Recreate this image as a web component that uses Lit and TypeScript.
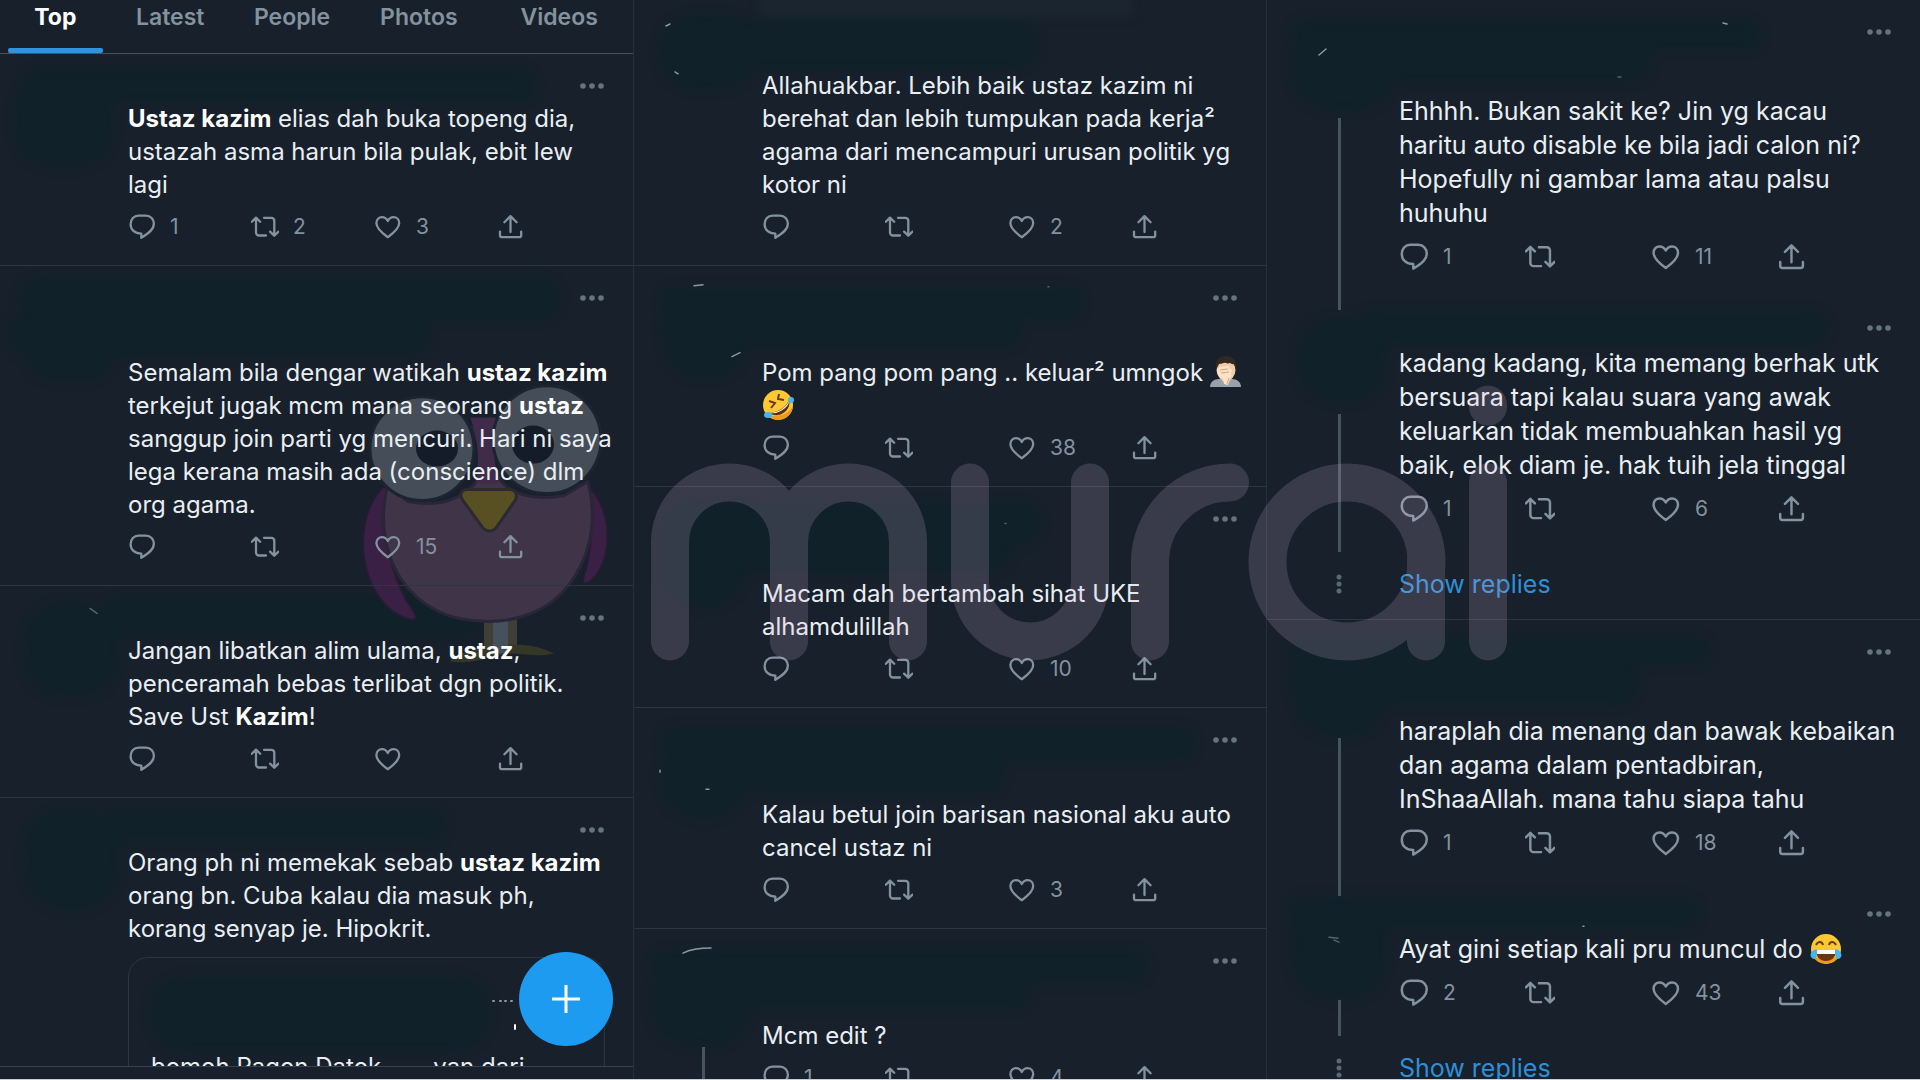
import { LitElement, html, css, svg, nothing, TemplateResult } from "lit";
import { customElement, property } from "lit/decorators.js";

type Part = string | { b: string } | { emoji: "palm" | "rofl" | "joy" };

interface Tweet {
  lines: Part[][];
  head: "none" | "short" | "tall";
  reply?: string;
  retweet?: string;
  like?: string;
  thread?: boolean;
  more?: boolean;
  quote?: boolean;
}

const b = (text: string): Part => ({ b: text });

const SEARCH: Tweet[] = [
  {
    head: "short",
    lines: [[b("Ustaz kazim"), " elias dah buka topeng dia,"], ["ustazah asma harun bila pulak, ebit lew"], ["lagi"]],
    reply: "1",
    retweet: "2",
    like: "3",
  },
  {
    head: "tall",
    lines: [
      ["Semalam bila dengar watikah ", b("ustaz kazim")],
      ["terkejut jugak mcm mana seorang ", b("ustaz")],
      ["sanggup join parti yg mencuri. Hari ni saya"],
      ["lega kerana masih ada (conscience) dlm"],
      ["org agama."],
    ],
    like: "15",
  },
  {
    head: "short",
    lines: [["Jangan libatkan alim ulama, ", b("ustaz"), ","], ["penceramah bebas terlibat dgn politik."], ["Save Ust ", b("Kazim"), "!"]],
  },
  {
    head: "short",
    lines: [["Orang ph ni memekak sebab ", b("ustaz kazim")], ["orang bn. Cuba kalau dia masuk ph,"], ["korang senyap je. Hipokrit."]],
    quote: true,
  },
];

const REPLIES: Tweet[] = [
  {
    head: "none",
    lines: [
      ["Allahuakbar. Lebih baik ustaz kazim ni"],
      ["berehat dan lebih tumpukan pada kerja²"],
      ["agama dari mencampuri urusan politik yg"],
      ["kotor ni"],
    ],
    like: "2",
  },
  { head: "tall", lines: [["Pom pang pom pang .. keluar² umngok ", { emoji: "palm" }], [{ emoji: "rofl" }]], like: "38" },
  { head: "tall", lines: [["Macam dah bertambah sihat UKE"], ["alhamdulillah"]], like: "10" },
  { head: "tall", lines: [["Kalau betul join barisan nasional aku auto"], ["cancel ustaz ni"]], like: "3" },
  { head: "tall", lines: [["Mcm edit ?"]], reply: "1", like: "4", thread: true },
];

const THREAD: Tweet[] = [
  {
    head: "tall",
    lines: [
      ["Ehhhh. Bukan sakit ke? Jin yg kacau"],
      ["haritu auto disable ke bila jadi calon ni?"],
      ["Hopefully ni gambar lama atau palsu"],
      ["huhuhu"],
    ],
    reply: "1",
    like: "11",
    thread: true,
  },
  {
    head: "short",
    lines: [
      ["kadang kadang, kita memang berhak utk"],
      ["bersuara tapi kalau suara yang awak"],
      ["keluarkan tidak membuahkan hasil yg"],
      ["baik, elok diam je. hak tuih jela tinggal"],
    ],
    reply: "1",
    like: "6",
    thread: true,
    more: true,
  },
  {
    head: "tall",
    lines: [["haraplah dia menang dan bawak kebaikan"], ["dan agama dalam pentadbiran,"], ["InShaaAllah. mana tahu siapa tahu"]],
    reply: "1",
    like: "18",
    thread: true,
  },
  {
    head: "short",
    lines: [["Ayat gini setiap kali pru muncul do ", { emoji: "joy" }]],
    reply: "2",
    like: "43",
    thread: true,
    more: true,
  },
];

const ICONS = {
  reply: svg`<path d="M10.500 2.600h7.500c4.600 0 7.900 3.500 7.900 8.200 0 4.900-3.400 8.500-12.600 14v-4.200C6.600 20.600 2.600 16.600 2.600 11.200 2.600 6.200 6 2.600 10.500 2.600z"/>`,
  retweet: svg`<path d="M.8 8.800 5 4.600l4.200 4.200M5 5v14.500a3 3 0 0 0 3 3h7M13 4.800h7.300a3 3 0 0 1 3 3v14.500M19.100 18.600l4.200 4.200 4.200-4.200"/>`,
  like: svg`<path d="M13.800 24.200C9 20.800 2.400 15.800 2.400 10.100c0-3.600 2.500-6 5.600-6 2.600 0 4.600 1.500 5.800 3.900 1.200-2.400 3.200-3.900 5.800-3.900 3.100 0 5.600 2.400 5.600 6 0 5.700-6.600 10.700-11.400 14.100z"/>`,
  share: svg`<path d="M7.400 9.200l6.100-6.100 6.100 6.100M13.500 3.500V19M3 18.600v3.600a2 2 0 0 0 2 2h17.200a2 2 0 0 0 2-2v-3.600"/>`,
};

const EMOJI = {
  palm: svg`
    <path d="M0 31c0-5 4-8 9-8h13c5 0 9 3 9 8z" fill="#9aa1a9"/>
    <path d="M12 19h8v6l-4 3-4-3z" fill="#e0b793"/>
    <ellipse cx="16" cy="14" rx="9.500" ry="11" fill="#efcba8"/>
    <path d="M6 14C4 4 10 0 16 0s12 4 10 14l-2-6c-2 1-3-1-4-1s-2 1-4 0-4 1-7 1z" fill="#32281f"/>
    <path d="M7 13l3-2 8-1c2 0 2 2 0 2l3 1c2 1 1 3 0 3 1 2 0 5-1 7l-2 6-4-1-1-5c-4-1-6-6-6-10z" fill="#fbe2c6"/>
    <path d="M10 14l8-1M11 17l8-1M19 22l-2 6" stroke="#d3a27c" fill="none"/>`,
  rofl: svg`
    <circle cx="16" cy="16" r="15" fill="#fcc934"/>
    <path d="M4 25a15 15 0 0 0 27-9c-3 8-14 14-27 9z" fill="#ee9a1d"/>
    <path d="M7 24C14 24 24 19 27 11c3 9-9 20-20 13z" fill="#5d2c12"/>
    <path d="M8 24C15 24 24 19 27 12c1 4-9 14-19 12z" fill="#fff"/>
    <path d="M7 12l6 2-4 5M17 5l-1 5 6 1" stroke="#6b3a12" stroke-width="2" fill="none"/>
    <ellipse cx="6" cy="26" rx="4" ry="3" fill="#45b5ec"/><ellipse cx="29" cy="11" rx="3" ry="3" fill="#45b5ec"/>`,
  joy: svg`
    <circle cx="16" cy="16" r="15" fill="#fcc934"/>
    <path d="M2 21a15 15 0 0 0 28 0c-6 7-22 7-28 0z" fill="#ee9a1d"/>
    <path d="M6 17h20c0 7-4 11-10 11S6 24 6 17z" fill="#6b3512"/>
    <path d="M7 17h18v4H7z" fill="#fff"/>
    <path d="M6 12c2-4 6-4 7 0M19 12c1-4 5-4 7 0" stroke="#6b3a12" stroke-width="2" fill="none"/>
    <path d="M1 24c-2-4 3-8 6-8 0 4 0 10-3 10-1 0-2-1-3-2zM31 24c2-4-3-8-6-8 0 4 0 10 3 10 1 0 2-1 3-2z" fill="#45b5ec"/>`,
};

@customElement("tweet-item")
class TweetItem extends LitElement {
  @property({ attribute: false }) tweet!: Tweet;

  static styles = css`
    :host {
      display: block;
    }
    .tweet {
      display: grid;
      grid-template-columns: var(--rail) minmax(0, 1fr);
    }
    .ruled {
      border-bottom: 1px solid #2a3641;
    }
    .rail {
      display: flex;
      flex-direction: column;
      padding-top: 118px;
      padding-left: var(--line-x);
    }
    .line {
      flex: 1;
      width: 3px;
      background: #46545f;
      margin-bottom: -14px;
    }
    .line.last {
      margin-bottom: -4px;
    }
    .head {
      display: flex;
      justify-content: flex-end;
      align-items: flex-start;
      box-sizing: border-box;
      padding: 20px 24px 0 0;
    }
    .none {
      height: 69px;
    }
    .short {
      height: var(--short);
    }
    .tall {
      height: var(--tall);
    }
    button {
      display: flex;
      align-items: center;
      gap: 14px;
      margin: 0;
      padding: 0;
      border: 0;
      background: none;
      color: #84929f;
      font: 400 21px/24px Inter, "Liberation Sans", sans-serif;
    }
    .dots svg {
      display: block;
      width: 34px;
      height: 24px;
      fill: #66747f;
    }
    .text {
      margin: 0;
      color: #e9eef2;
      font-size: var(--size);
      line-height: var(--leading);
      white-space: nowrap;
    }
    .text span {
      display: block;
      height: var(--leading);
    }
    .text b {
      font-weight: 700;
      color: #fff;
    }
    .emoji {
      width: 32px;
      height: 32px;
      vertical-align: -7px;
    }
    .actions {
      display: grid;
      grid-template-columns: repeat(4, var(--step));
      height: var(--bar);
      margin-bottom: 12px;
    }
    .actions svg {
      width: var(--icon);
      height: var(--icon);
      fill: none;
      stroke: currentColor;
      stroke-width: 2.300;
      stroke-linejoin: round;
      stroke-linecap: round;
    }
    .more {
      grid-column: 1 / -1;
      display: grid;
      grid-template-columns: var(--rail) minmax(0, 1fr);
      align-items: center;
      padding: 19px 0 18px;
      font-size: var(--size);
      line-height: var(--leading);
    }
    .more svg {
      width: 6px;
      height: 22px;
      margin-left: calc(var(--line-x) - 2px);
      fill: #5a6874;
    }
    .more a {
      color: #2f8fd6;
      text-decoration: none;
    }
    .quote {
      box-sizing: border-box;
      margin: 12px 28px 0 0;
      padding: 92px 0 0 22px;
      height: 180px;
      border: 1px solid #2a3641;
      border-radius: 20px;
      color: #e9eef2;
      font-size: var(--size);
      line-height: var(--leading);
      white-space: nowrap;
    }
    .quote p {
      display: flex;
      gap: 52px;
      margin: 0;
    }
  `;

  private part(p: Part) {
    if (typeof p === "string") return p;
    if ("b" in p) return html`<b>${p.b}</b>`;
    return html`<svg class="emoji" viewBox="0 0 32 32" aria-hidden="true">${EMOJI[p.emoji]}</svg>`;
  }

  private action(name: keyof typeof ICONS, label: string, count?: string) {
    return html`<button aria-label=${label}>
      <svg viewBox="0 0 28 28" aria-hidden="true">${ICONS[name]}</svg>${count ?? nothing}
    </button>`;
  }

  render() {
    const t = this.tweet;
    const ruled = !t.thread || t.more;
    return html`<article class="tweet ${ruled ? "ruled" : ""}">
      <div class="rail">${t.thread ? html`<div class="line ${t.more ? "last" : ""}"></div>` : nothing}</div>
      <div>
        <div class="head ${t.head}">
          ${t.head === "none"
            ? nothing
            : html`<button class="dots" aria-label="More">
                <svg viewBox="0 0 34 24" aria-hidden="true">
                  <circle cx="8" cy="12" r="2.800" /><circle cx="17" cy="12" r="2.800" /><circle cx="26" cy="12" r="2.800" />
                </svg>
              </button>`}
        </div>
        <p class="text">${t.lines.map((l) => html`<span>${l.map((p) => this.part(p))}</span>`)}</p>
        ${t.quote
          ? html`<div class="quote"><p><span>bomoh Pagon Datok</span><span>yan dari</span></p></div>`
          : html`<div class="actions">
              ${this.action("reply", "Reply", t.reply)} ${this.action("retweet", "Retweet", t.retweet)}
              ${this.action("like", "Like", t.like)} ${this.action("share", "Share")}
            </div>`}
      </div>
      ${t.more
        ? html`<div class="more">
            <svg viewBox="0 0 6 22" aria-hidden="true">
              <circle cx="3" cy="4" r="2.500" /><circle cx="3" cy="11" r="2.500" /><circle cx="3" cy="18" r="2.500" />
            </svg>
            <a href="#replies">Show replies</a>
          </div>`
        : nothing}
    </article>`;
  }
}

/* Brushed-over avatars and names: x, y, width, height. */
const BRUSH: number[][] = [
  [14, 73, 100, 94], [24, 68, 511, 34],
  [20, 277, 540, 43], [8, 312, 422, 44], [25, 315, 90, 66],
  [25, 603, 93, 94], [100, 598, 380, 38],
  [25, 810, 93, 100], [100, 809, 346, 34],
  [150, 977, 340, 75],
  [659, 14, 96, 76], [700, 19, 338, 50],
  [661, 287, 422, 33], [661, 312, 361, 36], [665, 312, 80, 66],
  [659, 500, 86, 107], [690, 503, 352, 42], [690, 530, 320, 43],
  [661, 727, 534, 34], [661, 750, 344, 43], [661, 735, 84, 85],
  [652, 950, 496, 34], [660, 970, 370, 40], [652, 955, 98, 92],
  [1292, 20, 469, 30], [1300, 40, 351, 43], [1292, 20, 103, 90],
  [1298, 317, 88, 86], [1360, 310, 468, 36],
  [1290, 637, 420, 28], [1290, 655, 349, 52], [1295, 655, 90, 83],
  [1290, 897, 408, 33], [1292, 897, 94, 103],
];

@customElement("app-root")
class AppRoot extends LitElement {
  static styles = css`
    :host {
      display: block;
      font-family: Inter, "Liberation Sans", sans-serif;
    }
    .page {
      position: relative;
      display: grid;
      grid-template-columns: 634fr 633fr 653fr;
      box-sizing: border-box;
      height: 100vh;
      overflow: hidden;
      background: #17202b;
      border-bottom: 1px solid #c9ced3;
    }
    .layer {
      position: absolute;
      inset: 0;
      width: 100%;
      height: 100%;
      pointer-events: none;
    }
    .column {
      --rail: 128px;
      --line-x: 68px;
      --short: 48px;
      --tall: 90px;
      --size: 24px;
      --leading: 33px;
      --step: 123px;
      --icon: 28px;
      --bar: 52px;
      position: relative;
      display: flex;
      flex-direction: column;
      min-width: 0;
      min-height: 0;
      box-sizing: border-box;
      border-right: 1px solid #25303b;
      overflow: hidden;
    }
    .wide {
      --rail: 132px;
      --line-x: 71px;
      --short: 50px;
      --tall: 94px;
      --size: 25px;
      --leading: 34px;
      --step: 126px;
      --icon: 30px;
      --bar: 54px;
      border-right: 0;
    }
    .feed {
      flex: 1;
      min-height: 0;
      overflow: hidden;
    }
    .tabs {
      display: grid;
      grid-template-columns: 109fr 121fr 123fr 131fr 150fr;
      height: 53px;
      border-bottom: 1px solid #46525d;
    }
    .tab {
      display: flex;
      flex-direction: column;
      justify-content: space-between;
      padding: 1px 6px 0 8px;
      color: #84929f;
      font-weight: 600;
      font-size: 23px;
      line-height: 32px;
      text-align: center;
      text-decoration: none;
    }
    .tab.on {
      color: #fff;
      font-weight: 700;
    }
    .tab.on::after {
      content: "";
      height: 5px;
      border-radius: 2px;
      background: #2f94dd;
    }
    .foot {
      height: 12px;
      border-top: 1px solid #36424d;
    }
    .compose {
      position: absolute;
      right: 20px;
      bottom: 33px;
      width: 94px;
      height: 94px;
      padding: 0;
      border: 0;
      border-radius: 50%;
      background: #1d9bf0;
    }
    .compose svg {
      display: block;
      width: 28px;
      height: 28px;
      margin: auto;
      stroke: #fff;
      stroke-width: 3;
    }
  `;

  private brush(): TemplateResult {
    return html`<svg class="layer" viewBox="0 0 1920 1080" preserveAspectRatio="none" aria-hidden="true">
      <defs>
        <filter id="soft" x="-5%" y="-5%" width="110%" height="110%" color-interpolation-filters="sRGB">
          <feGaussianBlur stdDeviation="5" />
        </filter>
      </defs>
      <g filter="url(#soft)">
        <rect x="760" y="-4" width="372" height="20" fill="#1c2631" />
        ${BRUSH.map(([x, y, w, h]) => svg`<rect x=${x} y=${y} width=${w} height=${h} rx=${Math.min(h / 2, 40)} fill="#10212a"/>`)}
      </g>
      <g stroke="#8c999f" stroke-width="1.500" fill="none" stroke-linecap="round">
        <path d="M666 26l4-2M675 72l3 2M694 286l9-1M732 357l8-4M660 771v2M706 790h3M683 954c8-4 16-5 28-5" />
        <path d="M1319 55l7-6M1723 23l4 1M1583 927h1" />
        <path d="M90 609l7 5M1618 77h3M1329 938l9 1M1334 941l5 2M1005 524h1M1048 287h1" stroke="#55646c" />
        <path d="M493 1002h1M500 1002h1M505 1002h1M511 1002h1" stroke-width="2" />
        <path d="M515 1026v4" stroke="#fff" stroke-width="2" />
      </g>
      ${this.bird()}
    </svg>`;
  }

  private bird(): TemplateResult {
    return svg`
      <g fill="#3b2045" stroke="#241c30" stroke-width="2">
        <path d="M384 486c-28 30-28 84 0 118 10 10 20 16 30 16 6-2-6-14-10-24-18-34-20-72-12-100z"/>
        <path d="M588 486c24 24 26 70 6 92-6 8-14 8-10-2 8-26 10-60 4-90z"/>
      </g>
      <g fill="#3e4038">
        <path d="M484 618h9v40h-9zM508 618h9v32h-9z"/>
        <path d="M450 662c8-8 22-14 38-12 14-6 44-8 66 4-16 4-30 0-44 0-18 2-38 12-60 8z" fill="#343628"/>
      </g>
      <path d="M493 618h15v36h-15z" fill="#46515e"/>
      <path d="M470 428c10 12 14 30 8 52-14 20-40 28-70 22l-20-18c-8 30-6 66 12 94 22 34 56 44 88 44s66-12 86-44c20-30 22-66 14-96l-24 14c-30 6-58-2-66-20-8-18-6-36 0-48z" fill="#3f3448" stroke="#29263a" stroke-width="3"/>
      <path d="M470 418h26c-4 22-2 46 2 66h-22c4-22 2-48-6-66z" fill="#412b4b"/>
      <g fill="#454d58" stroke="#1c2331" stroke-width="3">
        <circle cx="422" cy="449" r="52"/><circle cx="547" cy="440" r="54"/>
      </g>
      <g fill="#151c29"><ellipse cx="437" cy="449" rx="21" ry="18"/><ellipse cx="533" cy="445" rx="21" ry="19"/></g>
      <path d="M467 490h43c6 0 8 6 5 11l-18 26c-4 6-11 6-15 0l-19-26c-4-5-2-11 4-11z" fill="#585022" stroke="#2b2933" stroke-width="3"/>
    ` as unknown as TemplateResult;
  }

  private wordmark(): TemplateResult {
    return html`<svg class="layer" viewBox="0 0 1920 1080" preserveAspectRatio="none" aria-hidden="true">
      <g opacity="0.180" fill="none" stroke="#d9b6d7" stroke-width="38" stroke-linecap="round">
        <path d="M670 642V542.500a59.500 59.500 0 0 1 119 0V642M789 642V542.500a59.500 59.500 0 0 1 119 0V642" />
        <path d="M970 483v99a60 60 0 0 0 120 0v-99" />
        <path d="M1150 642v-79a80 80 0 0 1 80-80" />
        <circle cx="1347" cy="562.500" r="79.500" />
        <path d="M1426 562v80M1488 483v159M1488 405v2" />
      </g>
    </svg>`;
  }

  private feed(items: Tweet[]) {
    return html`<div class="feed">${items.map((t) => html`<tweet-item .tweet=${t}></tweet-item>`)}</div>`;
  }

  render() {
    return html`<main class="page">
      ${this.brush()}
      <section class="column" aria-label="Search results">
        <nav class="tabs">
          ${["Top", "Latest", "People", "Photos", "Videos"].map(
            (name, i) => html`<a class="tab ${i === 0 ? "on" : ""}" href="#${name.toLowerCase()}">${name}</a>`,
          )}
        </nav>
        ${this.feed(SEARCH)}
        <div class="foot"></div>
        <button class="compose" aria-label="Compose">
          <svg viewBox="0 0 28 28" aria-hidden="true"><path d="M14 0v28M0 14h28" /></svg>
        </button>
      </section>
      <section class="column" aria-label="Replies">${this.feed(REPLIES)}</section>
      <section class="column wide" aria-label="Thread">${this.feed(THREAD)}</section>
      ${this.wordmark()}
    </main>`;
  }
}
